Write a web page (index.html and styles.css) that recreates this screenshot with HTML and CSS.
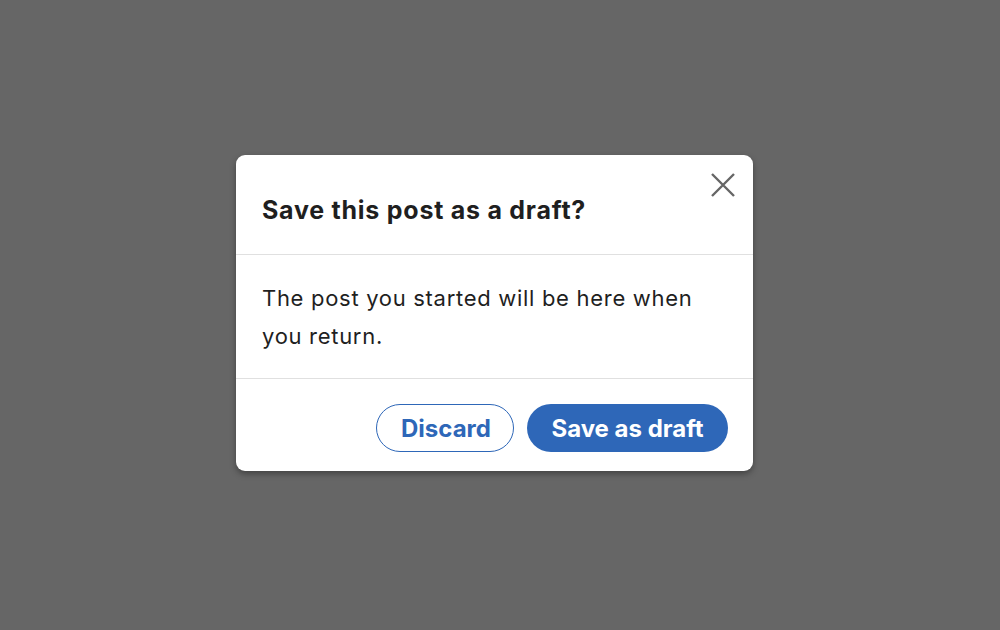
FILE: index.html
```html
<!DOCTYPE html>
<html lang="en">
<head>
<meta charset="utf-8">
<title>Save draft</title>
<link rel="stylesheet" href="styles.css">
</head>
<body>
<div class="overlay">
  <div class="modal" role="dialog" aria-labelledby="t">
    <div class="modal-header">
      <h2 id="t" class="modal-title">Save this post as a draft?</h2>
      <button class="close" aria-label="Dismiss">
        <svg width="26" height="26" viewBox="0 0 26 26"><path d="M2 2 L24 24 M24 2 L2 24" stroke="#666" stroke-width="2.4" stroke-linecap="butt" fill="none"/></svg>
      </button>
    </div>
    <div class="modal-body">
      <p>The post you started will be here when you return.</p>
    </div>
    <div class="modal-footer">
      <button class="btn btn-secondary">Discard</button>
      <button class="btn btn-primary">Save as draft</button>
    </div>
  </div>
</div>
</body>
</html>
```
FILE: styles.css
```css
html, body { margin: 0; padding: 0; }
body {
  width: 1000px;
  height: 630px;
  background: #666666;
  font-family: Inter, "Liberation Sans", sans-serif;
  color: #1f1f1f;
  overflow: hidden;
}
.overlay {
  padding: 155px 0 0 236px;
  display: flex;
}
.modal {
  width: 517px;
  background: #fff;
  border-radius: 9px;
  box-shadow: 0 3px 6px rgba(0,0,0,0.35);
  display: flex;
  flex-direction: column;
}
.modal-header {
  position: relative;
  height: 99px;
  border-bottom: 1px solid #e0e0e0;
  display: flex;
  align-items: center;
  padding: 0 26px;
}
.modal-title {
  margin: 10px 0 0 0;
  font-size: 25px;
  font-weight: 700;
  letter-spacing: 0.75px;
}
.close {
  position: absolute;
  top: 17px;
  right: 17px;
  width: 26px;
  height: 26px;
  padding: 0;
  border: 0;
  background: none;
  display: flex;
}
.modal-body {
  height: 123px;
  border-bottom: 1px solid #e0e0e0;
  padding: 0 26px;
  display: flex;
  align-items: center;
}
.modal-body p {
  margin: 0;
  font-size: 22px;
  line-height: 38px;
  letter-spacing: 0.7px;
  padding-right: 20px;
}
.modal-footer {
  height: 92px;
  display: flex;
  justify-content: flex-end;
  align-items: flex-start;
  gap: 13px;
  padding: 25px 25px 0 0;
  box-sizing: border-box;
}
.btn {
  height: 48px;
  border-radius: 24px;
  font-family: inherit;
  font-size: 24px;
  font-weight: 700;
  padding: 0 24px;
  cursor: pointer;
}
.btn-secondary {
  width: 138px;
  background: #fff;
  color: #2e67b8;
  border: 1.5px solid #2e67b8;
}
.btn-primary {
  width: 201px;
  background: #2e67b8;
  color: #fff;
  border: 0;
}
```
